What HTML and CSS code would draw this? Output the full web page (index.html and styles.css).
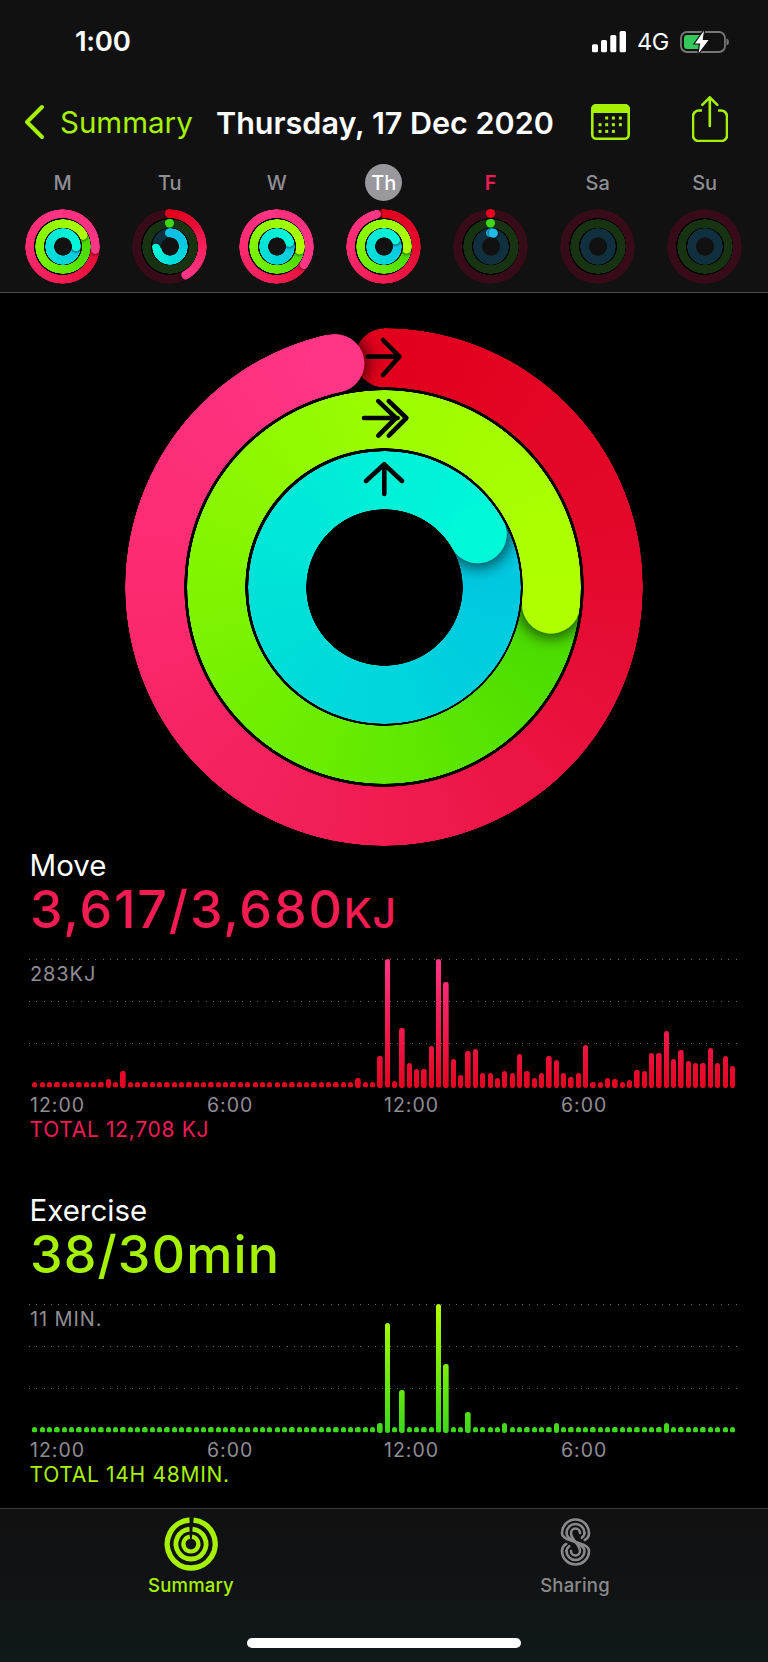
FILE: index.html
```html
<!DOCTYPE html>
<html lang="en">
<head>
<meta charset="utf-8">
<title>Activity</title>
<link rel="stylesheet" href="styles.css">
</head>
<body>
<div class="screen">
  <header class="top">
    <div class="status">
      <span class="time">1:00</span>
      <div class="status-right">
        <svg class="signal" width="35" height="22" viewBox="0 0 35 22"><rect x="0" y="13.3" width="6" height="8" rx="1.5"/><rect x="9" y="9" width="6" height="12.3" rx="1.5"/><rect x="18.3" y="4" width="6" height="17.3" rx="1.5"/><rect x="27.6" y="0" width="6.4" height="21.3" rx="1.5"/></svg>
        <span class="net">4G</span>
        <svg class="battery" width="50" height="30" viewBox="0 0 50 30"><rect x="1" y="5" width="44" height="20" rx="6" fill="none" stroke="#77777a" stroke-width="1.8"/><path d="M7 8h15v14H7a3 3 0 0 1-3-3v-8a3 3 0 0 1 3-3z" fill="#34c759"/><path d="M46.500 11.500c1.600.5 2.400 1.800 2.400 3.500s-.8 3-2.400 3.500z" fill="#77777a"/><path d="M24.800 1.500 14 17h5.500l-1.900 11.500 12-16h-6.200z" fill="#fff" stroke="#111112" stroke-width="1.2"/></svg>
      </div>
    </div>
    <nav class="nav">
      <svg class="chev" width="22" height="36" viewBox="0 0 22 36"><path d="M19 3 4 18l15 15" fill="none" stroke="#a5f100" stroke-width="4" stroke-linecap="round" stroke-linejoin="round"/></svg>
      <span class="back">Summary</span>
      <h1 class="title">Thursday, 17 Dec 2020</h1>
      <svg class="cal" width="39" height="36" viewBox="0 0 39 36">
        <rect x="1.3" y="1.3" width="36.4" height="33.4" rx="4" fill="none" stroke="#a5f100" stroke-width="2.6"/>
        <path d="M5 0h29a5 5 0 0 1 5 5v4H0V5a5 5 0 0 1 5-5z" fill="#a5f100"/>
        <g fill="#a5f100"><rect x="14.2" y="12.5" width="3" height="3"/><rect x="20.9" y="12.5" width="3" height="3"/><rect x="27.9" y="12.5" width="3" height="3"/><rect x="7.5" y="19.2" width="3" height="3"/><rect x="14.2" y="19.2" width="3" height="3"/><rect x="20.9" y="19.2" width="3" height="3"/><rect x="27.9" y="19.2" width="3" height="3"/><rect x="7.5" y="25.9" width="3" height="3"/><rect x="14.2" y="25.9" width="3" height="3"/><rect x="20.9" y="25.9" width="3" height="3"/></g>
      </svg>
      <svg class="share" width="36" height="46" viewBox="0 0 36 46"><path d="M10 14.5H7a6 6 0 0 0-6 6v19a5.500 5.500 0 0 0 5.500 5.500h23a5.500 5.500 0 0 0 5.500-5.500v-19a6 6 0 0 0-6-6h-3" fill="none" stroke="#a5f100" stroke-width="2.6"/><path d="M17.8 30V1.500M10.300 8.800l7.500-7.500 7.500 7.500" fill="none" stroke="#a5f100" stroke-width="2.6" stroke-linecap="round" stroke-linejoin="round"/></svg>
    </nav>
    <div class="week">
      <div class="day"><span class="dl">M</span><div class="rings mini" data-day="0"></div></div>
      <div class="day"><span class="dl">Tu</span><div class="rings mini" data-day="1"></div></div>
      <div class="day"><span class="dl">W</span><div class="rings mini" data-day="2"></div></div>
      <div class="day"><span class="dl now">Th</span><div class="rings mini" data-day="3"></div></div>
      <div class="day"><span class="dl today">F</span><div class="rings mini" data-day="4"></div></div>
      <div class="day"><span class="dl">Sa</span><div class="rings mini" data-day="5"></div></div>
      <div class="day"><span class="dl">Su</span><div class="rings mini" data-day="6"></div></div>
    </div>
  </header>

  <main class="main">
    <div class="rings big" data-day="big">
      <svg class="arrows" width="518" height="518" viewBox="0 0 518 518">
        <path d="M242.8 28.600h31.600M258 12l16.400 16.600L258 47"/>
        <path d="M239 90h33.600M253.300 73.200 270.900 90l-17.600 17.600M263.800 73.200 281.400 90l-17.600 17.600"/>
        <path d="M259.300 166v-29.700M241 153l18.300-16.700L277 153"/>
      </svg>
    </div>

    <section class="stat move">
      <div class="label">Move</div>
      <div class="value">3,617/3,680<span class="unit">KJ</span></div>
      <div class="chart">
        <div class="lines"><i></i><i></i><i></i></div>
        <span class="ymax">283KJ</span>
        <div class="bars" id="moveBars"></div>
      </div>
      <div class="times"><span>12:00</span><span>6:00</span><span>12:00</span><span>6:00</span></div>
      <div class="total">TOTAL 12,708 KJ</div>
    </section>

    <section class="stat exercise">
      <div class="label">Exercise</div>
      <div class="value">38/30min</div>
      <div class="chart">
        <div class="lines"><i></i><i></i><i></i></div>
        <span class="ymax">11 MIN.</span>
        <div class="bars" id="exBars"></div>
      </div>
      <div class="times"><span>12:00</span><span>6:00</span><span>12:00</span><span>6:00</span></div>
      <div class="total">TOTAL 14H 48MIN.</div>
    </section>
  </main>

  <footer class="tabs">
    <div class="tab active">
      <svg width="54" height="54" viewBox="0 0 54 54" fill="none" stroke="#a5f100">
        <path d="M29.5 3.100A24 24 0 1 1 25.500 3.050" stroke-width="5.4"/>
        <path d="M28.5 12.100A15 15 0 1 1 25.500 12.100" stroke-width="4.8"/>
        <path d="M28 19.600A7.500 7.500 0 1 1 25.800 19.600" stroke-width="4.2"/>
      </svg>
      <span>Summary</span>
    </div>
    <div class="tab">
      <svg class="sharing" width="31" height="48" viewBox="0 0 31 48" fill="none" stroke="#8a8a8c" stroke-width="2.6" stroke-linecap="round">
        <path d="M29 15A13.500 13.500 0 0 0 2 15C2 25 29 23 29 33A13.500 13.500 0 0 1 2 33"/>
        <path d="M24.500 15A9 9 0 0 0 6.500 15C6.500 24 24.500 24 24.500 33A9 9 0 0 1 6.500 33"/>
        <path d="M20 15A4.500 4.500 0 0 0 11 15C11 22 20 26 20 33A4.500 4.500 0 0 1 11 33"/>
        <path d="M29 15C29 18 27.500 20.500 24.800 22M24.500 15C24.500 16.800 23.500 18.500 21.800 19.800M2 33C2 30 3.500 27.500 6.200 26M6.500 33C6.500 31.200 7.500 29.500 9.200 28.200"/>
      </svg>
      <span>Sharing</span>
    </div>
    <div class="home"></div>
  </footer>
</div>
<script src="app.js"></script>
</body>
</html>
```

FILE: styles.css
```css
* { box-sizing: border-box; }
html, body { margin: 0; padding: 0; background: #000; }
body { font-family: Inter, "Noto Sans", sans-serif; color: #fff; }
.screen { width: 768px; height: 1662px; display: flex; flex-direction: column; overflow: hidden; }

/* header */
.top { height: 293px; background: #111112; border-bottom: 1px solid #4a4a4c; flex: none; }
.status { height: 84px; display: flex; align-items: center; padding-left: 75px; }
.time { font-size: 27.5px; font-weight: 600; letter-spacing: -.3px; line-height: 1; }
.status-right { margin-left: auto; display: flex; align-items: center; padding-right: 38px; }
.signal { fill: #fff; margin-right: 10px; }
.net { font-size: 23.5px; line-height: 1; width: 43px; letter-spacing: -.4px; }
.nav { height: 76px; display: flex; align-items: center; padding-left: 23px; }
.chev { flex: none; }
.back { font-size: 29.5px; color: #a5f100; margin-left: 15px; width: 156px; }
.title { margin: 0; font-size: 30.5px; font-weight: 600; width: 374.5px; white-space: nowrap; }
.cal { flex: none; margin-top: -1px; }
.share { flex: none; margin-left: 62.5px; margin-top: -7px; }
.week { display: grid; grid-template-columns: repeat(7, 107px); padding-left: 9.2px; }
.day { display: flex; flex-direction: column; align-items: center; padding-top: 4px; }
.dl { width: 37px; height: 37px; border-radius: 50%; display: flex; align-items: center; justify-content: center; font-size: 20px; font-weight: 500; color: #8e8e93; margin-bottom: 8px; }
.dl.now { background: #98989d; color: #fff; }
.dl.today { color: #f01a55; font-weight: 600; }

/* activity rings */
.rings { display: grid; place-items: center; position: relative; flex: none; }
.big { width: 518px; height: 518px; margin: 35px 0 0 125px; --sh: 0 0 15px 4px rgba(0, 0, 0, .65); }
.mini { width: 75px; height: 75px; background: radial-gradient(closest-side, #111112 9px, #000 9.5px, #000 28.5px, transparent 29px); --sh: 0 0 3px 1px rgba(0, 0, 0, .6); }
.ring {
  grid-area: 1 / 1; position: relative; width: calc(var(--R) * 2); height: calc(var(--R) * 2); border-radius: 50%;
  -webkit-mask: radial-gradient(closest-side, transparent calc(100% - var(--w) - .5px), #000 calc(100% - var(--w)), #000 calc(100% - .5px), transparent 100%);
  mask: radial-gradient(closest-side, transparent calc(100% - var(--w) - .5px), #000 calc(100% - var(--w)), #000 calc(100% - .5px), transparent 100%);
}
.big .red { --R: 259px; --w: 59px; }
.big .green { --R: 197px; --w: 58px; }
.big .cyan { --R: 136.5px; --w: 58px; }
.mini .red { --R: 37.5px; --w: 8.8px; }
.mini .green { --R: 27.9px; --w: 8.7px; }
.mini .cyan { --R: 18.1px; --w: 8.9px; }

.red { --start: #e2001c; --m1: #e40a2e; --m2: #f01c52; --m3: #fc2a70; --end: #ff3585; --dim: #370c18; --lap-end: #ff2f7c; }
.green { --start: #48d800; --m1: #62ea00; --m2: #80f400; --m3: #9cfc00; --end: #b0ff00; --dim: #173312; --lap-end: #9cfc00; }
.cyan { --start: #14bfe8; --m1: #00c8e0; --m2: #00d6dc; --m3: #00e4d8; --end: #00f8d8; --dim: #11303f; --lap-end: #00f0d8; }
.cyan.flat { --start: #20bbe8; --m1: #20bbe8; --m2: #20bbe8; --m3: #20bbe8; --end: #20bbe8; }

.base, .arc { position: absolute; inset: 0; border-radius: 50%; }
.dimmed > .base { background: var(--dim); }
.red.lap > .base { background: conic-gradient(#e2001c, #e40a2e 90deg, #f01c52 180deg, #fc2a70 270deg, #ff3585 360deg); }
.green.lap > .base { background: conic-gradient(#4cdc00 0, #4cdc00 110deg, #62ea00 180deg, #80f400 270deg, #9cfc00 360deg); }
.cyan.lap > .base { background: conic-gradient(#00c4e0 0, #00c8e0 90deg, #00d6dc 180deg, #00e2d8 270deg, #00f0d8 360deg); }
.lap > .arc { background: conic-gradient(var(--lap-end), var(--end) var(--a), transparent var(--a)); }
.part > .arc { background: conic-gradient(var(--start), var(--m1) calc(var(--a) * .26), var(--m2) calc(var(--a) * .52), var(--m3) calc(var(--a) * .78), var(--end) var(--a), transparent var(--a)); }

.cap {
  position: absolute; width: var(--w); height: var(--w); border-radius: 50%;
  left: calc(50% - var(--w) / 2); top: calc(50% - var(--w) / 2);
  transform: rotate(var(--a)) translateY(calc(var(--w) / 2 - var(--R)));
  background: var(--end);
}
.cap.first { --a: 0deg; background: var(--start); }
.cap.shade { box-shadow: var(--sh); background: transparent; }
.dot > .cap { background: var(--dotc); }
.red.dot { --dotc: #f0001f; }
.green.dot { --dotc: #3dd816; }
.cyan.dot { --dotc: #1cbfe8; }
.arrows { grid-area: 1 / 1; position: relative; fill: none; stroke: #000; stroke-width: 4.6px; stroke-linecap: round; stroke-linejoin: round; }

/* stats */
.main { flex: 1; background: #000; min-height: 0; }
.stat { padding-top: 2px; }
.exercise { margin-top: 49px; }
.move { --accent: #f21c52; --bar-a: #e4051f; --bar-b: #ff3388; --vs: 1.8px; }
.exercise { --accent: #a5f100; --bar-a: #3bd91a; --bar-b: #b4ff00; --vs: 1.1px; }
.label { font-size: 29.5px; line-height: 34px; padding-left: 29.5px; }
.value { font-size: 52px; line-height: 56px; padding-left: 30px; color: var(--accent); letter-spacing: var(--vs); font-weight: 500; white-space: nowrap; }
.unit { font-size: 41px; line-height: 1; letter-spacing: .5px; }
.chart { position: relative; width: 708px; height: 128.5px; margin: 21px 0 0 29px; }
.lines { position: absolute; inset: 0; display: flex; flex-direction: column; gap: 41.2px; }
.lines i { display: block; height: 1px; flex: none; background: repeating-linear-gradient(90deg, #6a6a6c 0 1px, transparent 1px 7.36px); }
.ymax { position: absolute; left: 1px; top: 2.5px; font-size: 20px; line-height: 24px; color: #8e8e93; letter-spacing: .9px; }
.bars { position: absolute; inset: 0; display: flex; align-items: flex-end; gap: 2.06px; padding-left: 3.2px; }
.bars i { display: block; flex: none; width: 5.3px; border-radius: 2.65px; background: linear-gradient(to top, var(--bar-a), var(--bar-b)) bottom / 100% 128.5px no-repeat; }
.times { display: grid; grid-template-columns: repeat(4, 177px); padding-left: 30px; margin-top: 6.5px; font-size: 19.5px; line-height: 22px; color: #8e8e93; letter-spacing: 1px; }
.total { padding-left: 29.5px; margin-top: 2px; font-size: 21px; line-height: 24px; color: var(--accent); letter-spacing: .7px; }

/* tab bar */
.tabs { height: 154px; flex: none; border-top: 1px solid #3a3a3c; background: linear-gradient(to top, #0f1a1b, #111213 55%, #111112); display: grid; grid-template-columns: 382px 386px; position: relative; }
.tab { display: flex; flex-direction: column; align-items: center; color: #8a8a8c; font-size: 18.5px; line-height: 22px; font-weight: 500; letter-spacing: .2px; padding-top: 8px; }
.tab:last-of-type { padding-left: 1.5px; }
.tab svg { flex: none; }
.tab span { margin-top: 3px; }
.tab.active { color: #a5f100; }
.sharing { margin: 1px 0 5px; }
.home { position: absolute; left: 247px; bottom: 14.5px; width: 274px; height: 9.5px; border-radius: 5px; background: #fff; }
```

FILE: app.js
```js
// Activity rings: [mode, angle] per ring. Modes: lap = goal passed, part = partial arc,
// bare = partial arc with no track, flat = short one-colour arc, dot = zero progress, none = empty track.
var RINGS = {
  0: [['lap', 95], ['lap', 61], ['lap', 90]],
  1: [['part', 150], ['dot', 0], ['part', 262]],
  2: [['lap', 123], ['lap', 98], ['lap', 72]],
  3: [['bare', 347.5], ['lap', 96], ['lap', 60.6]],
  4: [['dot', 0], ['dot', 0], ['flat', 12]],
  5: [['none', 0], ['none', 0], ['none', 0]],
  6: [['none', 0], ['none', 0], ['none', 0]],
  big: [['bare', 347.5], ['lap', 96], ['lap', 60.6]]
};
var NAMES = ['red', 'green', 'cyan'];
var PART = { bare: 'part', part: 'part dimmed', flat: 'part dimmed flat' };

function ringHtml(name, spec) {
  var mode = spec[0], a = spec[1], style = ' style="--a:' + a + 'deg"';
  if (mode === 'none') return '<div class="ring ' + name + ' dimmed"><div class="base"></div></div>';
  if (mode === 'dot') return '<div class="ring ' + name + ' dimmed dot"' + style + '><div class="base"></div><i class="cap"></i></div>';
  if (mode === 'lap') return '<div class="ring ' + name + ' lap"' + style + '><div class="base"></div><i class="cap shade"></i><div class="arc"></div><i class="cap"></i></div>';
  return '<div class="ring ' + name + ' ' + PART[mode] + '"' + style + '><div class="base"></div><i class="cap first"></i><i class="cap shade"></i><div class="arc"></div><i class="cap"></i></div>';
}

document.querySelectorAll('.rings').forEach(function (el) {
  var html = RINGS[el.dataset.day].map(function (s, i) { return ringHtml(NAMES[i], s); }).join('');
  el.insertAdjacentHTML('afterbegin', html);
});

// Bar heights in px; anything not listed is the small dot.
var MOVE = {10: 9, 12: 17, 44: 10, 47: 32, 48: 128.5, 49: 7, 50: 60, 51: 25, 52: 19, 53: 19, 54: 42, 55: 128.5, 56: 106, 57: 29, 58: 13, 59: 37, 60: 39, 61: 15, 62: 15, 63: 10, 64: 17, 65: 15, 66: 34, 67: 17, 68: 10, 69: 15, 70: 32, 71: 28, 72: 15, 73: 11, 74: 15, 75: 43, 76: 6, 77: 6, 78: 10, 79: 9, 80: 6, 81: 8, 82: 18, 83: 17, 84: 35, 85: 35, 86: 57, 87: 29, 88: 38, 89: 27, 90: 25, 91: 25, 92: 40, 93: 25, 94: 32, 95: 22};
var EX = {47: 10, 48: 110, 50: 43, 55: 128.5, 56: 69, 59: 21, 64: 10, 71: 10, 86: 10};

function bars(id, data) {
  var html = '';
  for (var i = 0; i < 96; i++) html += '<i style="height:' + (data[i] || 5.3) + 'px"></i>';
  document.getElementById(id).innerHTML = html;
}
bars('moveBars', MOVE);
bars('exBars', EX);
```
